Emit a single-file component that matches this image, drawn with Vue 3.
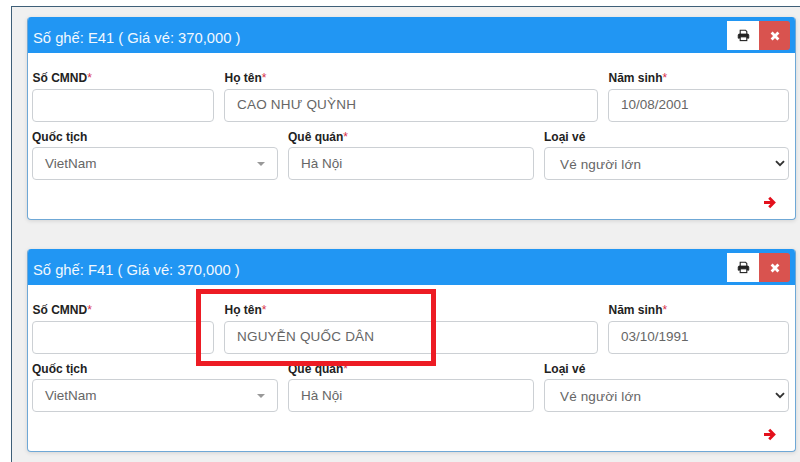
<script setup>
const cards = [
  { seat: 'E41', name: 'CAO NHƯ QUỲNH', birth: '10/08/2001' },
  { seat: 'F41', name: 'NGUYỄN QUỐC DÂN', birth: '03/10/1991' }
]
</script>

<template>
  <div class="page">
    <div class="frame">
      <section v-for="card in cards" :key="card.seat" class="card">
        <header class="head">
          <h3 class="title">Số ghế: {{ card.seat }} ( Giá vé: 370,000 )</h3>
          <div class="actions">
            <button class="btn print" aria-label="In">
              <svg width="13" height="13" viewBox="0 0 13 13">
                <path d="M3.200 5V1.200h5.300L9.800 2.500V5" fill="none" stroke="#222" stroke-width="1.100"/>
                <path d="M2.600 9.200H1.200V6.200C1.200 5.500 1.600 5 2.300 5h8.400c.7 0 1.100.5 1.100 1.200v3h-1.400" fill="#222" stroke="#222" stroke-width=".8"/>
                <rect x="3.200" y="7.800" width="6.600" height="3.800" fill="#fff" stroke="#222" stroke-width="1.100"/>
              </svg>
            </button>
            <button class="btn close" aria-label="Đóng">
              <svg width="10" height="10" viewBox="0 0 10 10">
                <path d="M1.600 1.600l6.800 6.800M8.400 1.600L1.600 8.400" stroke="#fff" stroke-width="2.800" fill="none"/>
              </svg>
            </button>
          </div>
        </header>
        <div class="body">
          <div class="row first">
            <div class="field cmnd">
              <label class="lab">Số CMND<i>*</i></label>
              <div class="box"></div>
            </div>
            <div class="field name">
              <label class="lab">Họ tên<i>*</i></label>
              <div class="box caps">{{ card.name }}</div>
            </div>
            <div class="field birth">
              <label class="lab">Năm sinh<i>*</i></label>
              <div class="box">{{ card.birth }}</div>
            </div>
          </div>
          <div class="row second">
            <div class="field third">
              <label class="lab">Quốc tịch</label>
              <div class="box sel">
                VietNam
                <span class="caret"></span>
              </div>
            </div>
            <div class="field third">
              <label class="lab">Quê quán<i>*</i></label>
              <div class="box">Hà Nội</div>
            </div>
            <div class="field third last">
              <label class="lab">Loại vé</label>
              <div class="box sel wide">
                Vé người lớn
                <svg class="chev" width="10" height="7" viewBox="0 0 10 7">
                  <path d="M1 1.200l4 4 4-4" fill="none" stroke="#333" stroke-width="1.900"/>
                </svg>
              </div>
            </div>
          </div>
          <div class="foot">
            <svg width="13" height="13" viewBox="0 0 13 13">
              <path d="M1 6.500h9M6.200 1.800l4.700 4.700-4.700 4.700" fill="none" stroke="#e3101c" stroke-width="2.800"/>
            </svg>
          </div>
        </div>
      </section>
      <div class="mark"></div>
    </div>
  </div>
</template>

<style scoped>
.page {
  width: 800px;
  height: 462px;
  overflow: hidden;
  background: #fff;
  padding: 6px 0 0 11px;
  box-sizing: border-box;
  font-family: "Liberation Sans", Arial, sans-serif;
}
.frame {
  position: relative;
  width: 800px;
  height: 470px;
  box-sizing: border-box;
  border-left: 1px solid #3f5f78;
  border-top: 1px solid #3f5f78;
  background: #f0f0f0;
  padding: 10px 0 0 15px;
}
.card {
  width: 769px;
  height: 203px;
  box-sizing: border-box;
  margin-bottom: 29px;
  background: #fff;
  border: 1px solid #6fa8d6;
  border-top: 0;
  border-radius: 4px;
  box-shadow: 0 1px 4px rgba(0, 0, 0, .12);
  overflow: hidden;
}
.head {
  height: 36px;
  margin: 0 -1px;
  background: #2196f3;
  display: flex;
  justify-content: space-between;
  padding: 4px 6px 3px 6px;
  box-sizing: border-box;
}
.title {
  margin: 0;
  padding-top: 7px;
  font-size: 14.750px;
  line-height: 20px;
  font-weight: 400;
  color: #f2f8fe;
}
.actions { display: flex; height: 29px; }
.btn {
  border: 0;
  padding: 0;
  display: flex;
  align-items: center;
  justify-content: center;
  height: 29px;
}
.print { width: 32px; background: #fff; }
.close {
  width: 31px;
  background: #d9534f;
  border-radius: 0 3px 3px 0;
}
.body { padding: 16px 6px 0 4px; }
.row { display: flex; gap: 10px; }
.second { margin-top: 5px; }
.field { display: flex; flex-direction: column; min-width: 0; flex: none; }
.cmnd { width: 182px; }
.name { width: 374px; }
.birth { width: 181px; }
.third { width: 246px; }
.last { width: 245px; }
.lab {
  height: 20px;
  line-height: 19px;
  font-size: 12px;
  font-weight: 700;
  color: #222;
  white-space: nowrap;
}
.second .lab { line-height: 21px; }
.first .lab { padding-left: .5px; }
.lab i { font-style: normal; font-weight: 400; color: #d8304a; }
.box {
  position: relative;
  height: 33px;
  box-sizing: border-box;
  border: 1px solid #ccd0d4;
  border-radius: 4px;
  background: #fff;
  padding: 0 12px;
  line-height: 30px;
  font-size: 13.500px;
  color: #666;
}
.second .box { line-height: 31px; }
.caps { letter-spacing: .2px; }
.sel.wide { padding-left: 15px; letter-spacing: .15px; line-height: 33px; }
.caret {
  position: absolute;
  right: 12px;
  top: 14px;
  border-left: 4px solid transparent;
  border-right: 4px solid transparent;
  border-top: 4px solid #999;
}
.chev { position: absolute; right: 3px; top: 12px; }
.foot {
  display: flex;
  justify-content: flex-end;
  padding: 16px 13px 0 0;
}
.mark {
  position: absolute;
  left: 184px;
  top: 282px;
  width: 240px;
  height: 77px;
  box-sizing: border-box;
  border: 5px solid #ed1c24;
}
</style>
